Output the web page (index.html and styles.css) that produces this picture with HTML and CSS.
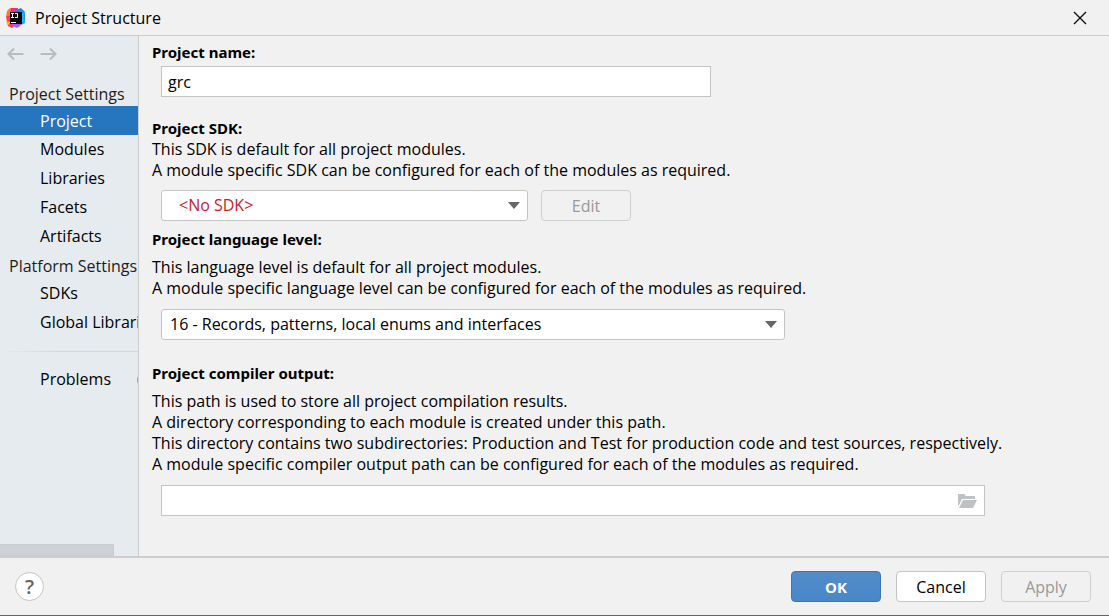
FILE: index.html
```html
<!DOCTYPE html>
<html lang="en">
<head>
<meta charset="utf-8">
<title>Project Structure</title>
<link rel="stylesheet" href="styles.css">
</head>
<body>
<div class="dialog">
  <header class="titlebar">
    <svg class="logo" width="20" height="20" viewBox="0 0 20 20" aria-hidden="true">
      <path d="M1 3 4 0 10 1 9 10 0 9Z" fill="#fb7a2e"/>
      <path d="M0 8 9 8 9 17 6 20 2 18 1 14Z" fill="#fc3a5c"/>
      <path d="M5 0 12 0 11 10 4 8Z" fill="#f52c78"/>
      <path d="M10 2 15 0 19 4 19 15 15 17 9 13Z" fill="#1c86ee"/>
      <path d="M15 5 19 4 18 9 19 15 15 16Z" fill="#22b5f5"/>
      <path d="M6 16 16 15 14 18 11 20 7 18Z" fill="#a85cf0"/>
      <path d="M0 13 4 14 3 17 1 16Z" fill="#fbb324"/>
      <rect x="4" y="4" width="12" height="12" fill="#0b0506"/>
      <path d="M5 5.500h3M6.500 5.500v4M5 9.500h3M9 5.500h2.500v4h-2.500M5 14.500h5" fill="none" stroke="#fff" stroke-width="1"/>
    </svg>
    <h1 class="title">Project Structure</h1>
    <button class="close" type="button" aria-label="Close">
      <svg width="14" height="14" viewBox="0 0 14 14"><path d="M1 1 13 13M13 1 1 13" stroke="#111" stroke-width="1.400"/></svg>
    </button>
  </header>

  <div class="body">
    <nav class="sidebar">
      <div class="history">
        <button type="button" aria-label="Back"><svg width="18" height="14" viewBox="0 0 18 14"><path d="M16.500 7H2M7 1.500 1.500 7 7 12.500" fill="none" stroke="#b9bcbe" stroke-width="2"/></svg></button>
        <button type="button" aria-label="Forward"><svg width="18" height="14" viewBox="0 0 18 14"><path d="M.5 7H15M10 1.500 15.500 7 10 12.500" fill="none" stroke="#b9bcbe" stroke-width="2"/></svg></button>
      </div>
      <h2 class="group">Project Settings</h2>
      <a class="item selected" href="#project" aria-current="page">Project</a>
      <a class="item" href="#modules">Modules</a>
      <a class="item" href="#libraries">Libraries</a>
      <a class="item" href="#facets">Facets</a>
      <a class="item" href="#artifacts">Artifacts</a>
      <h2 class="group">Platform Settings</h2>
      <a class="item" href="#sdks">SDKs</a>
      <a class="item" href="#global">Global Libraries</a>
      <hr class="separator">
      <a class="item problems" href="#problems">Problems <span class="badge"></span></a>
      <div class="scrollbar"></div>
    </nav>

    <main class="content">
      <section class="section name">
        <label class="heading" for="name">Project name:</label>
        <input class="field name-field" id="name" type="text" value="grc">
      </section>

      <section class="section sdk">
        <label class="heading" for="sdk">Project SDK:</label>
        <p>This SDK is default for all project modules.<br>A module specific SDK can be configured for each of the modules as required.</p>
        <div class="row">
          <div class="combo sdk-combo">
            <select id="sdk"><option>&lt;No SDK&gt;</option></select>
            <svg class="arrow" width="12" height="7" viewBox="0 0 12 7"><path d="M0 0H12L6 7Z"/></svg>
          </div>
          <button class="button" type="button" disabled>Edit</button>
        </div>
      </section>

      <section class="section level">
        <label class="heading" for="level">Project language level:</label>
        <p>This language level is default for all project modules.<br>A module specific language level can be configured for each of the modules as required.</p>
        <div class="combo level-combo">
          <select id="level"><option>16 - Records, patterns, local enums and interfaces</option></select>
          <svg class="arrow" width="12" height="7" viewBox="0 0 12 7"><path d="M0 0H12L6 7Z"/></svg>
        </div>
      </section>

      <section class="section output">
        <label class="heading" for="output">Project compiler output:</label>
        <p>This path is used to store all project compilation results.<br>A directory corresponding to each module is created under this path.<br>This directory contains two subdirectories: Production and Test for production code and test sources, respectively.<br>A module specific compiler output path can be configured for each of the modules as required.</p>
        <div class="path">
          <input class="field" id="output" type="text">
          <button class="browse" type="button" aria-label="Browse">
            <svg width="20" height="16" viewBox="0 0 20 16"><path d="M0 1H6L8 3H17V6H4L1 12 0 13Z" fill="#bcc2c6"/><path d="M5 7H19L15 15H1Z" fill="#bcc2c6"/></svg>
          </button>
        </div>
      </section>
    </main>
  </div>

  <footer class="footer">
    <button class="help" type="button" aria-label="Help">?</button>
    <button class="button primary" type="button">OK</button>
    <button class="button plain" type="button">Cancel</button>
    <button class="button" type="button" disabled>Apply</button>
  </footer>
</div>
</body>
</html>
```
FILE: styles.css
```css
* { box-sizing: border-box; }

body {
  margin: 0;
  background: #f1f1f1;
  color: #000;
  font-family: "Open Sans", "Noto Sans", sans-serif;
  font-size: 16px;
  line-height: 21px;
}

button, input, select { font: inherit; color: inherit; }
button { padding: 0; border: 0; background: none; }
h1, h2, p { margin: 0; font: inherit; }

.dialog {
  display: flex;
  flex-direction: column;
  min-height: 100vh;
  border-bottom: 1px solid #636363;
}

.titlebar {
  display: flex;
  align-items: center;
  gap: 9px;
  height: 36px;
  padding: 0 22px 0 6px;
  border-bottom: 1px solid #cdcdcd;
}
.title { flex: 1; padding-top: 2px; }
.close { display: flex; }

.body { display: flex; flex: 1; }

.sidebar {
  display: flex;
  flex-direction: column;
  flex: none;
  width: 139px;
  overflow: hidden;
  border-right: 1px solid #cdcdcd;
  background: #e6ebef;
  white-space: nowrap;
}
.history { display: flex; gap: 15px; padding: 11px 7px 18px; }
.history button { display: flex; }
.group { height: 28px; padding: 5px 0 0 9px; color: #1d1d1d; }
.item {
  height: 29px;
  padding-left: 40px;
  color: #000;
  line-height: 29px;
  text-decoration: none;
}
.item.selected { padding-top: 1px; background: #2675bf; color: #fff; }
.history + .group { height: 27px; }
.separator {
  width: 100%;
  height: 1px;
  margin: 14px 0 13px;
  border: 0;
  background: linear-gradient(to right, #e6ebef, #d5d9dc 40%);
}
.problems { display: flex; align-items: center; gap: 26px; }
.badge { flex: none; width: 20px; height: 14px; border-radius: 7px; background: #9aa0a5; }
.scrollbar { width: 114px; height: 12px; margin-top: auto; border: 1px solid #c8ccd0; border-left: 0; background: #ced2d7; }

.content { flex: 1; min-width: 0; padding: 6px 13px; }
.section { display: flex; flex-direction: column; }
.heading { font-family: "Noto Sans", sans-serif; font-size: 15px; font-weight: 700; }
.field {
  width: 100%;
  height: 31px;
  padding: 0 6px;
  border: 1px solid #c4c4c4;
  background: #fff;
}
.name-field { max-width: 550px; margin: 3px 0 0 9px; }
.sdk { margin-top: 21px; }
.row { display: flex; gap: 13px; margin: 9px 0 0 9px; }
.combo { display: grid; align-items: center; width: 100%; }
.combo > * { grid-area: 1 / 1; }
.combo select {
  width: 100%;
  height: 31px;
  padding: 0 8px;
  border: 1px solid #c4c4c4;
  border-radius: 3px;
  background: #fff;
  appearance: none;
}
.arrow { justify-self: end; margin-right: 8px; fill: #666; pointer-events: none; }
.sdk-combo { max-width: 367px; }
.sdk-combo select { padding-left: 17px; color: #c7222d; }
.level { margin-top: 8px; }
.level p, .output p { margin-top: 7px; }
.level-combo { max-width: 624px; margin: 10px 0 0 9px; }
.output { margin-top: 23px; }
.path { display: grid; align-items: center; max-width: 824px; margin: 10px 0 0 9px; }
.path > * { grid-area: 1 / 1; }
.browse { display: flex; justify-self: end; margin-right: 7px; }

.button {
  width: 90px;
  height: 31px;
  padding-top: 2px;
  border: 1px solid #c4c4c4;
  border-radius: 4px;
}
.button:disabled { border-color: #cfcfcf; color: #999; }
.plain { background: #fff; }
.primary { border-color: #3f75b5; background: linear-gradient(#528cc8, #4987c9); color: #fff; font-size: 15px; font-weight: 700; }

.footer {
  display: flex;
  align-items: center;
  gap: 15px;
  height: 59px;
  padding: 0 18px 0 15px;
  border-top: 2px solid #cdcdcd;
}
.help {
  width: 29px;
  height: 29px;
  margin-right: auto;
  border: 1px solid #c4c4c4;
  border-radius: 50%;
  background: #fff;
  color: #666;
  font-size: 20px;
  font-weight: 600;
}
```
